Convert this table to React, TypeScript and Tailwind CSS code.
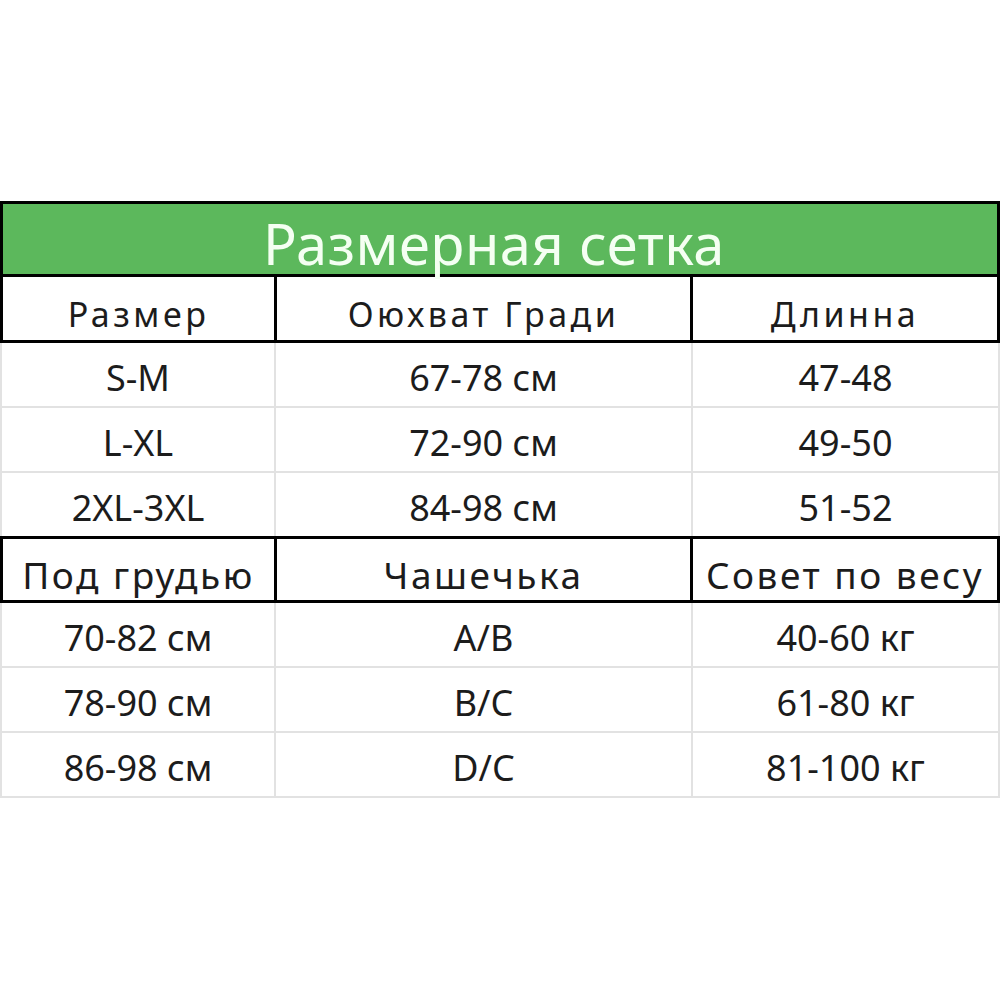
import React from 'react';

const font = { fontFamily: '"Noto Sans", "DejaVu Sans", sans-serif' };

type Row = [string, string, string];

const block1Head: Row = ['Размер', 'Оюхват Гради', 'Длинна'];
const block1Rows: Row[] = [
    ['S-M', '67-78 см', '47-48'],
    ['L-XL', '72-90 см', '49-50'],
    ['2XL-3XL', '84-98 см', '51-52'],
];
const block2Head: Row = ['Под грудью', 'Чашечька', 'Совет по весу'];
const block2Rows: Row[] = [
    ['70-82 см', 'A/B', '40-60 кг'],
    ['78-90 см', 'B/C', '61-80 кг'],
    ['86-98 см', 'D/C', '81-100 кг'],
];

const HeadRow = ({ row, top }: { row: Row; top?: boolean }) => (
    <div
        className={`grid grid-cols-[274px_416px_1fr] border-x-[3px] border-b-[3px] border-black ${top ? 'border-t-[3px] h-[67px]' : 'h-[66px]'}`}
    >
        {row.map((c, i) => (
            <div
                key={i}
                className={`flex items-center justify-center pt-[10px] leading-none text-[#1c1c1c] whitespace-nowrap ${top ? 'text-[37px] tracking-[2.5px]' : 'text-[34px] tracking-[3.5px]'} ${i < 2 ? 'border-r-[3px] border-black' : ''}`}
            >
                {c}
            </div>
        ))}
    </div>
);

const DataRow = ({ row, last }: { row: Row; last?: boolean }) => (
    <div
        className={`grid grid-cols-[274px_417px_1fr] border-x-2 border-[#e2e2e2] ${last ? 'h-[63px]' : 'h-[65px] border-b-2'}`}
    >
        {row.map((c, i) => (
            <div
                key={i}
                className={`flex items-center justify-center pt-[7px] leading-none text-[36px] text-[#1c1c1c] whitespace-nowrap ${i < 2 ? 'border-r-2 border-[#e2e2e2]' : ''}`}
            >
                {c}
            </div>
        ))}
    </div>
);

export default function App() {
    return (
        <div className="w-[1000px] h-[1000px] bg-white pt-[201px]" style={font}>
            {/* Title */}
            <div className="h-[76px] border-[3px] border-black bg-[#5cb85c] flex items-center justify-center pt-[7px]">
                <span className="text-[56px] leading-none text-[#f4fff2] tracking-[0.5px] -ml-[12px]">Размерная сетка</span>
            </div>

            <HeadRow row={block1Head} />
            {block1Rows.map((r, i) => (
                <DataRow key={i} row={r} last={i === block1Rows.length - 1} />
            ))}

            <HeadRow row={block2Head} top />
            {block2Rows.map((r, i) => (
                <DataRow key={i} row={r} />
            ))}
        </div>
    );
}
